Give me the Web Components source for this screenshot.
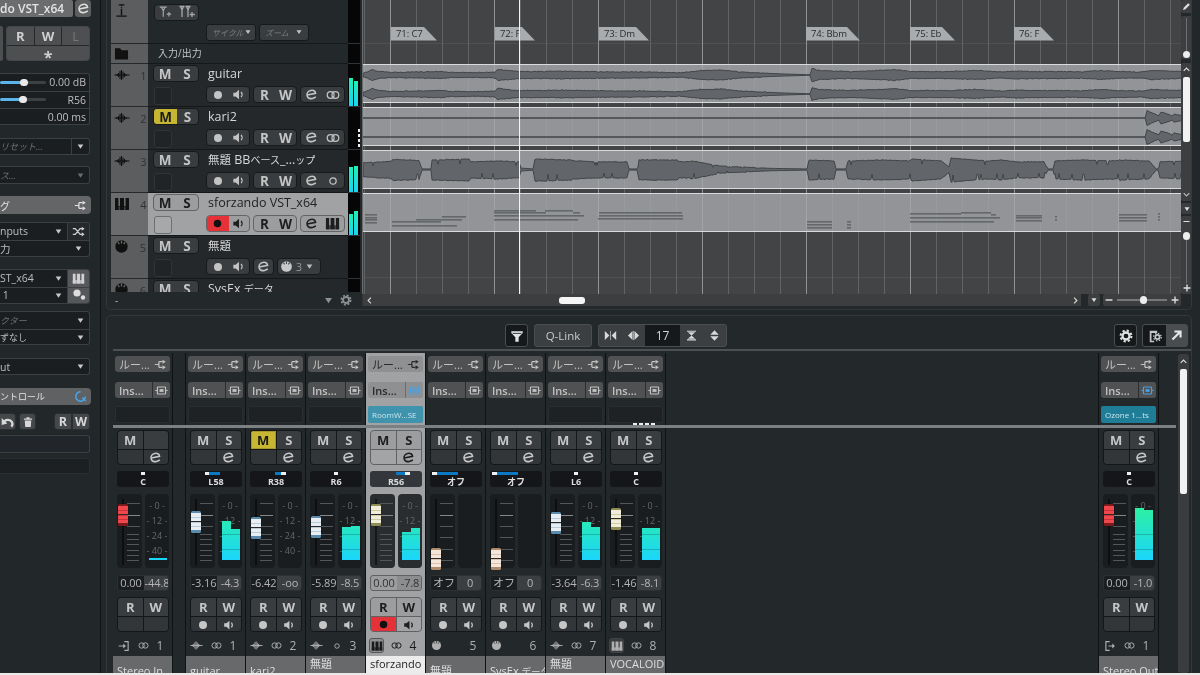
<!DOCTYPE html>
<html lang="ja"><head><meta charset="utf-8"><title>Mix</title>
<style>
html,body{margin:0;padding:0;background:#22272a;overflow:hidden}
body{width:1200px;height:675px;font-family:"Open Sans","Noto Sans CJK JP",sans-serif;color:#c8c8c8}
</style></head><body>
<daw-app>
  <daw-inspector slot="left"></daw-inspector>
  <daw-project slot="top"></daw-project>
  <daw-mixer slot="bottom"></daw-mixer>
</daw-app>
<script>
const ICONS={
 wave:'<path d="M.5 8h15M3 7v2M4.5 6v4M6 4v8M7.5 3v10M9 4.5v7M10.5 6v4M12 7v2" stroke="currentColor" stroke-width="1.1" fill="none"/>',
 piano:'<path d="M1 2h3.4v12H1zM6 2h4v12H6zM11.6 2H15v12h-3.4z" fill="currentColor"/><path d="M1 10h14v4H1z" fill="currentColor"/><path d="M5.2 10.5v3.5M10.8 10.5v3.5" stroke="#8a8a8a" stroke-width=".6"/>',
 knob:'<circle cx="8" cy="8" r="6.6" fill="currentColor"/><path d="M8 1.8v3M4.2 3.2l1.5 2.2M11.8 3.2l-1.5 2.2" stroke="var(--kn,#8a8b8c)" stroke-width="1.3"/>',
 e:'<g transform="rotate(-12 8 8)"><path d="M2.6 7.6h10.6C13.4 4.6 11.4 3 8.2 3 4.8 3 2.4 5.2 2.4 8.2c0 3 2.3 4.8 5.8 4.8 1.6 0 3-.3 4.4-.9" fill="none" stroke="currentColor" stroke-width="1.9"/></g>',
 link:'<circle cx="5.3" cy="8" r="3.9" fill="none" stroke="currentColor" stroke-width="1.4"/><circle cx="10.7" cy="8" r="3.9" fill="none" stroke="currentColor" stroke-width="1.4"/>',
 mono:'<circle cx="8" cy="8" r="3.6" fill="none" stroke="currentColor" stroke-width="1.4"/>',
 speaker:'<path d="M2.5 6H5l3.5-3v10L5 10H2.5z" fill="currentColor"/><path d="M10.8 5.2c1.2 1.6 1.2 4 0 5.6" fill="none" stroke="currentColor" stroke-width="1.3"/>',
 dot:'<circle cx="8" cy="8" r="4" fill="currentColor"/>',
 route:'<path d="M1 8h5M6 4.5h4.5M6 11.5h4.5M6 4.5v7" fill="none" stroke="currentColor" stroke-width="1.5"/><path d="M10.5 2l4 2.5-4 2.5zM10.5 9l4 2.5-4 2.5z" fill="currentColor"/>',
 insert:'<rect x="3" y="3.7" width="10" height="8.6" rx="1" fill="none" stroke="currentColor" stroke-width="1.4"/><rect x="5.5" y="6.3" width="5" height="3.4" fill="currentColor"/><path d="M.5 8h2.5M13 8h2.5" stroke="currentColor" stroke-width="1.4"/>',
 tri:'<path d="M3 4.5h10L8 12z" fill="currentColor"/>',
 gear:'<circle cx="8" cy="8" r="4" fill="none" stroke="currentColor" stroke-width="2.6"/><circle cx="8" cy="8" r="6.2" fill="none" stroke="currentColor" stroke-width="2.3" stroke-dasharray="2.6 2.27"/>',
 funnel:'<path d="M1.5 2.5h13v2.2l-4.6 4.6v5.2H6.1V9.3L1.5 4.7z" fill="currentColor"/><path d="M3 5h10" stroke="#1c1f21" stroke-width="1"/>',
 folder:'<path d="M1 2.5h5.5L8 4.5h7v10H1z" fill="currentColor"/>',
 shuffle:'<path d="M1 4.5h3l6 7h2.5M1 11.5h3l6-7h2.5" fill="none" stroke="currentColor" stroke-width="1.6"/><path d="M12 2l3.5 2.5L12 7zM12 9l3.5 2.5L12 14z" fill="currentColor"/>',
 undo:'<path d="M3 8.5C4.5 5 10.5 4.5 12.5 8c1 2 .5 4-.8 5.2" fill="none" stroke="currentColor" stroke-width="2.6"/><path d="M.8 3.5l6.4 6.2L.8 11.5z" fill="currentColor"/>',
 trash:'<path d="M2.5 3.3h11v1.8h-11zM6 1.8h4v1.5H6zM3.7 6h8.6l-.6 8.5H4.3z" fill="currentColor"/>',
 ring:'<path d="M8 2.2a5.8 5.8 0 1 0 5.8 5.8" fill="none" stroke="currentColor" stroke-width="1.8"/><path d="M10 9.5l4.5 4" stroke="currentColor" stroke-width="1.8"/>',
 pin:'<path d="M8.5 2.2h5v11.6h-5M1 8h8" fill="none" stroke="currentColor" stroke-width="1.5"/><path d="M7 4.8L10.6 8 7 11.2z" fill="currentColor"/>',
 pout:'<path d="M7.5 2.2h-5v11.6h5M6 8h7" fill="none" stroke="currentColor" stroke-width="1.5"/><path d="M11 4.8L14.6 8 11 11.2z" fill="currentColor"/>',
 tin:'<path d="M1 2.5l5.6 5.5L1 13.5zM15 2.5L9.4 8l5.6 5.5zM7.6 2.5h.8v11h-.8z" fill="currentColor"/>',
 tout:'<path d="M6.8 2.5L1.2 8l5.6 5.5zM9.2 2.5L14.8 8l-5.6 5.5zM7.6 2.5h.8v11h-.8z" fill="currentColor"/>',
 hour:'<path d="M2.5 2h11v1.5h-11zM2.5 12.5h11V14h-11zM3.5 4h9L8 8zM3.5 12l4.5-4 4.5 4z" fill="currentColor"/>',
 updn:'<path d="M8 1.5l5.2 5.7H2.8zM8 14.5l-5.2-5.7h10.4z" fill="currentColor"/>',
 arrow:'<path d="M3 13L12 4M5.5 3h7.5v7.5" fill="none" stroke="currentColor" stroke-width="2.6"/>',
 wingear:'<path d="M2 2h8.5v2.5H4v9h3v1.5H2z" fill="currentColor"/><circle cx="10.8" cy="9.2" r="2.4" fill="none" stroke="currentColor" stroke-width="2"/><circle cx="10.8" cy="9.2" r="4.3" fill="none" stroke="currentColor" stroke-width="1.5" stroke-dasharray="1.7 1.67"/>',
 pencil:'<path d="M2 14l1-4 8-8 3 3-8 8z" fill="currentColor"/>',
 plus:'<path d="M8 2.5v11M2.5 8h11" stroke="currentColor" stroke-width="2.2"/>',
 minus:'<path d="M2.5 8h11" stroke="currentColor" stroke-width="2.2"/>',
 left:'<path d="M10.5 3L5.5 8l5 5" fill="none" stroke="currentColor" stroke-width="2"/>',
 right:'<path d="M5.5 3l5 5-5 5" fill="none" stroke="currentColor" stroke-width="2"/>',
 up:'<path d="M3 10.5l5-5 5 5" fill="none" stroke="currentColor" stroke-width="2"/>',
 down:'<path d="M3 5.5l5 5 5-5" fill="none" stroke="currentColor" stroke-width="2"/>',
 tadd:'<path d="M2 2.5h8M4 2.5l2 4v7M8 2.5l-2 4M12.5 8v5M10 10.5h5" fill="none" stroke="currentColor" stroke-width="1.3"/>',
 ttadd:'<path d="M.5 2.5h5M1.5 2.5L3 6v7M4.5 2.5L3 6M6.5 2.5h5M7.5 2.5L9 6v7M10.5 2.5L9 6M13 8v5M10.8 10.5h5" fill="none" stroke="currentColor" stroke-width="1.3"/>',
 cursor:'<path d="M8 6v7M5 2h6M2.5 14h11" stroke="currentColor" stroke-width="1.5" fill="none"/><path d="M8 2v4" stroke="currentColor" stroke-width="1.5" stroke-dasharray="1 1"/>'
};
class IcOn extends HTMLElement{
 connectedCallback(){
  const n=this.getAttribute('n'),s=this.getAttribute('s')||14;
  if(!this.shadowRoot)this.attachShadow({mode:'open'});
  this.shadowRoot.innerHTML=`<style>:host{display:inline-flex;align-items:center;justify-content:center;flex:none;line-height:0}</style><svg width="${s}" height="${s}" viewBox="0 0 16 16">${ICONS[n]||''}</svg>`;
 }
}
customElements.define('ic-on',IcOn);

class DawApp extends HTMLElement{
 constructor(){super();this.attachShadow({mode:'open'}).innerHTML=`<style>
 :host{display:flex;flex-direction:column;width:1200px;height:675px;overflow:hidden;background:#22272a;filter:blur(.3px)}
 .main{display:flex;height:673px;overflow:hidden}
 .right{width:1086px;margin-left:5px;display:flex;flex-direction:column;gap:5px}
 .edge{height:2px;background:#e9e9e9;flex:none}
 </style><div class="main"><slot name="left"></slot><div class="right"><slot name="top"></slot><slot name="bottom"></slot></div></div><div class="edge"></div>`;}
}
customElements.define('daw-app',DawApp);

/* ---------- Inspector ---------- */
class DawInspector extends HTMLElement{
 constructor(){super();const dd='<ic-on n="tri" s="9"></ic-on>';
 this.attachShadow({mode:'open'}).innerHTML=`<style>
 :host{display:block;width:91px;flex:none;padding-right:9px;border-right:1px solid #101315;height:673px;overflow:hidden;font-size:10.5px;color:#bdbdbd;box-sizing:content-box}
 *{box-sizing:border-box}
 .r{display:flex}
 .title{height:17px;gap:2px}
 .title b{flex:1;background:#6a6c6d;color:#e4e4e4;font-weight:600;font-size:12px;line-height:17px;white-space:nowrap;border-radius:0 2px 2px 0}
 .title i{width:16px;background:#5c5e60;border-radius:3px;color:#ddd;display:flex;align-items:center;justify-content:center}
 .auto{margin-top:9px;height:35px;gap:3px}
 .auto u{width:3px;background:#4c4e50;border-radius:0 2px 2px 0}
 .rwl{flex:none;width:84px;display:grid;grid-template-columns:1fr 1fr 1fr;grid-template-rows:1fr 1fr;gap:1px;background:#26292c;border:1px solid #44474a;border-radius:3px;overflow:hidden}
 .rwl span{background:#4d4f51;display:flex;align-items:center;justify-content:center;font-weight:700;font-size:13px;color:#d0d0d0}
 .rwl .l{color:#777;font-weight:400}
 .rwl .st{grid-column:1/4;font-size:16px}
 .box{width:90px;background:#1b1e20;border:1px solid #3c4043;border-left:0;border-radius:0 3px 3px 0;overflow:hidden}
 .row{height:17px;display:flex;align-items:center;padding:0 3px 0 0;white-space:nowrap;border-top:1px solid #3c4043}
 .row:first-child{border-top:0;height:16.5px}
 .one{height:100%!important}
 .sp{flex:1}
 .bar{height:3.5px;border-radius:2px}
 .knob{width:7.5px;height:7.5px;background:#e9e9e9;border-radius:50%;margin:0 -2px;position:relative}
 .dim{color:#6f7274;font-style:italic}
 .jp{font-size:9px}
 .arrow{width:18px;height:100%;border-left:1px solid #3c4043;margin-right:-3px;display:flex;align-items:center;justify-content:center;color:#c8c8c8}
 .arrow.n{border:0}
 .arrow.off{color:#6a6d6f}
 .hdr{height:18px;width:91px;background:#636567;border-radius:0 4px 4px 0;color:#e2e2e2;font-size:10px;display:flex;align-items:center;padding-right:4px;white-space:nowrap}
 .two{display:grid;grid-template-columns:1fr 22px;grid-auto-rows:1fr}
 .two .side{border-left:1px solid #3c4043;background:#26292c;display:flex;align-items:center;justify-content:center;color:#d0d0d0}
 .two .side.lt{background:#55575a}
 .two .row{border-top:0;height:auto}
 .two .row.b,.two .side.b{border-top:1px solid #3c4043}
 .btn{height:17px;background:#45484a;border:1px solid #2b2e30;border-radius:3px;display:flex;align-items:center;justify-content:center;color:#d8d8d8;font-weight:700;font-size:12.5px}
 </style>
 <div class="r title"><b>do VST_x64</b><i><ic-on n="e" s="13"></ic-on></i></div>
 <div class="r auto"><u></u><div class="rwl"><span>R</span><span>W</span><span class="l">L</span><span class="st">*</span></div></div>
 <div class="box" style="margin-top:12px;height:52px">
  <div class="row"><div class="bar" style="width:22px;background:#5bb4ea"></div><div class="knob"></div><div class="bar" style="width:20px;background:#3d4144"></div><span class="sp"></span>0.00 dB</div>
  <div class="row"><div class="bar" style="width:21px;background:#5bb4ea"></div><div class="knob"></div><div class="bar" style="width:21px;background:#3d4144"></div><span class="sp"></span>R56</div>
  <div class="row"><span class="sp"></span>0.00 ms</div>
 </div>
 <div class="box" style="margin-top:13px;height:17px"><div class="row one"><span class="dim jp">リセット...</span><span class="sp"></span><span class="arrow">${dd}</span></div></div>
 <div class="box" style="margin-top:11px;height:18px"><div class="row one"><span class="dim jp">ス...</span><span class="sp"></span><span class="arrow n off">${dd}</span></div></div>
 <div class="hdr" style="margin-top:12px">グ<span class="sp"></span><ic-on n="route" s="13"></ic-on></div>
 <div class="box two" style="margin-top:8px;height:35px">
  <div class="row">nputs<span class="sp"></span><span class="arrow n">${dd}</span></div><div class="side"><ic-on n="shuffle" s="13"></ic-on></div>
  <div class="row b" style="grid-column:1/3">力<span class="sp"></span><span class="arrow n" style="margin-right:-1px">${dd}</span></div>
 </div>
 <div class="box two" style="margin-top:12px;height:35px">
  <div class="row">ST_x64<span class="sp"></span><span class="arrow n">${dd}</span></div><div class="side lt"><ic-on n="piano" s="13"></ic-on></div>
  <div class="row b">&nbsp;1<span class="sp"></span><span class="arrow n">${dd}</span></div><div class="side lt b"><svg width="14" height="14" viewBox="0 0 14 14"><circle cx="5" cy="5" r="3.6" fill="#ddd"/><circle cx="11" cy="9.5" r="2.2" fill="#ddd"/></svg></div>
 </div>
 <div class="box" style="margin-top:7px;height:34px">
  <div class="row"><span class="dim jp">クター</span><span class="sp"></span><span class="arrow n">${dd}</span></div>
  <div class="row"><span class="jp">ずなし</span><span class="sp"></span><span class="arrow n">${dd}</span></div>
 </div>
 <div class="box" style="margin-top:13px;height:17px"><div class="row one">ut<span class="sp"></span><span class="arrow n">${dd}</span></div></div>
 <div class="hdr" style="margin-top:13px;height:17px;background:#5f6163;font-size:9px">ントロール<span class="sp"></span><ic-on n="ring" s="13" style="color:#4aa8ee"></ic-on></div>
 <div class="r" style="margin-top:8px;width:90px">
  <div class="btn" style="width:16px;border-left:0;border-radius:0 3px 3px 0"><ic-on n="undo" s="14"></ic-on></div>
  <div class="btn" style="width:17px;margin-left:3px"><ic-on n="trash" s="12"></ic-on></div>
  <span class="sp"></span>
  <div class="btn" style="width:18px;border-radius:3px 0 0 3px">R</div><div class="btn" style="width:18px;border-radius:0 3px 3px 0">W</div>
 </div>
 <div class="box" style="margin-top:5px;height:18px;background:#22262a"></div>
 <div class="box" style="margin-top:5px;height:16px;background:#1d2023;border-color:#2a2e30"></div>`;}
}
customElements.define('daw-inspector',DawInspector);

/* ---------- Track list rows ---------- */
const BTN=`
 .g{display:inline-flex;height:17px;background:var(--btn);border:1px solid var(--bd);border-radius:4px;overflow:hidden;flex:none}
 .g>span{flex:1;display:flex;align-items:center;justify-content:center;font-weight:700;font-size:13.5px;color:var(--fg)}
`;
class TrackRow extends HTMLElement{
 constructor(){super();this.attachShadow({mode:'open'});}
 connectedCallback(){
  const a=k=>this.getAttribute(k)||'',sel=this.hasAttribute('sel'),t=a('type');
  const kind=a('kind');
  let tail;
  if(t==='midi5'){
   tail=`<div class="g" style="width:21px"><span><ic-on n="e" s="13"></ic-on></span></div>
   <div class="g" style="width:44px;padding:0 6px 0 2px;align-items:center;gap:3px;--kn:#45484a"><ic-on n="knob" s="13" style="color:#c8c8c8"></ic-on><b style="font-weight:400;font-size:10.5px;color:#9a9a9a;flex:1">3</b><ic-on n="tri" s="9" style="color:#bbb"></ic-on></div>`;
  }else{
   tail=`<div class="g rw"><span>R</span><span>W</span></div><div class="g rw" style="width:45px"><span style="flex:.9"><ic-on n="e" s="13"></ic-on></span><span><ic-on n="${t==='mono'?'mono':t==='piano'?'piano':'link'}" s="${t==='piano'?15:14}"></ic-on></span></div>`;
  }
  const m=a('meter');
  this.shadowRoot.innerHTML=`<style>
  :host{display:grid;grid-template-columns:37px 200px 12px;height:43px;--btn:${sel?'#9b9d9e':'#3a3d3f'};--bd:${sel?'#626466':'#171a1c'};--fg:${sel?'#1e1e1e':'#c4c4c4'};--kn:${sel?'#6f7071':'#5c5d5e'};font-size:12.5px}
  *{box-sizing:border-box}
  .h{background:${sel?'#6b6c6d':'#5c5d5e'};border-bottom:1px solid #26292b;color:#111;display:flex;padding:3px 0 0 3px;align-items:flex-start;--kn:#6e6f70}
  .h i{font-style:normal;color:#303234;font-size:11px;margin-left:9px;margin-top:1px;width:12px;text-align:center}
  .b{background:${sel?'#a0a2a3':'#24282b'};border-bottom:1px solid #15181a;display:grid;grid-template-columns:58px 1fr;padding-top:1px}
  .l{padding-left:5px}
  ${BTN}
  .ms{width:46px}
  .m{background:#c7b632;color:#1c1c1c!important;flex:1.1!important}
  .sq{width:18px;height:18px;margin:4px 0 0 1px;border:1px solid ${sel?'#6d6f71':'#303437'};border-radius:3px;background:${sel?'#a6a8a9':'#202427'}}
  .nm{height:17px;line-height:17px;color:${sel?'#222':'#d6d6d6'};white-space:nowrap;padding-left:2px}
  .nm .k{font-size:11.5px}.nm .j{font-size:10px}
  .bt{display:flex;gap:3px;margin-top:4px}
  .rw{width:44px}
  .g.rec{width:44px}
  .redc{background:#e53239;color:#111!important;flex:1.05!important}
  .mt{background:#060607;border-bottom:1px solid #30343a;display:flex;gap:1px;padding:0 0 0 1px;align-items:flex-end}
  .mt u{width:4px;background:linear-gradient(#1ff0b8,#18d5f0)}
  .mt em{margin-left:auto;width:2px;height:20px;background:repeating-linear-gradient(#eee 0 3px,transparent 3px 5px)}
  </style>
  <div class="h"><ic-on n="${kind}" s="${kind==='knob'?15:16}"></ic-on><i>${a('num')}</i></div>
  <div class="b"><div class="l"><div class="g ms"><span class="${a('mute')?'m':''}">M</span><span>S</span></div><div class="sq"></div></div>
  <div><div class="nm">${a('name')}</div><div class="bt"><div class="g rec"><span class="${sel?'redc':''}"><ic-on n="dot" s="${sel?15:16}"></ic-on></span><span><ic-on n="speaker" s="15"></ic-on></span></div>${tail}</div></div></div>
  <div class="mt">${m?m.split(',').map(h=>`<u style="height:${h}px"></u>`).join(''):''}${this.hasAttribute('dash')?'<em></em>':''}</div>`;
 }
}
customElements.define('track-row',TrackRow);

/* ---------- Timeline lane ---------- */
function seeded(s){return()=>(s=(s*16807)%2147483647)/2147483647}
function interp(p,x){for(let i=1;i<p.length;i++){if(x<=p[i][0]){const a=p[i-1],b=p[i];return a[1]+(b[1]-a[1])*(x-a[0])/Math.max(b[0]-a[0],.001)}}return p[p.length-1][1]}
function wavePath(pts,cy,seed,jit,skew,spike){
 const r=seeded(seed),top=[],bot=[];
 for(let x=362;x<=1181;x+=1){
  const a=interp(pts,x);const big=a>1.5;
  const j=big?(r()-.5)*jit:0;
  let t=a+j,b=a+(big?(r()-.5)*jit:0);
  if(spike&&big&&r()<spike){if(r()<.7)b*=.45;else t*=.55}
  top.push((x-362)+','+(cy-t*(skew||1)).toFixed(1));
  bot.unshift((x-362)+','+(cy+b*(2-(skew||1))).toFixed(1));
 }
 return 'M'+top.join('L')+'L'+bot.join('L')+'Z';
}
const P1=[[362,2],[366,3],[371,5.5],[378,3.5],[390,2.5],[415,3],[440,3.5],[450,2.5],[480,2.4],[494,3],[497,5.5],[518,3.5],[540,3.5],[560,3.8],[598,3.2],[640,3],[680,2.2],[700,4.5],[720,5],[740,3],[770,1.5],[806,.3],[809,.3],[811,6.5],[818,4.5],[830,4],[850,3.5],[886,5],[893,5.5],[910,3.5],[950,3.5],[975,4.5],[1000,3],[1015,4],[1030,3.5],[1060,3.5],[1080,3.2],[1100,4.5],[1115,3.5],[1140,3],[1150,4.5],[1181,3.5]];
const P2=[[362,.05],[1144,.05],[1146,7.5],[1150,5.5],[1157,2.5],[1158,2.5],[1160,6],[1168,3.5],[1171,2],[1173,4],[1181,2.5]];
const P3=[[362,7],[390,8.5],[392,10.5],[418,9.5],[421,.6],[430,.6],[431,10],[468,11],[470,8],[495,9],[497,9],[518,8],[520,1.5],[532,.6],[534,11],[570,10],[573,9],[598,8],[600,8],[626,8],[628,.6],[636,.6],[638,10],[676,10],[678,8],[689,8],[690,9],[702,7],[720,3.5],[770,1.2],[806,.6],[808,10],[833,9],[835,.6],[845,.6],[847,9],[880,10],[908,9],[911,11],[940,9],[948,3],[950,12],[986,9],[989,9],[1000,10],[1015,8],[1017,8],[1043,8],[1047,.6],[1052,.6],[1054,9],[1080,10],[1115,9],[1118,10],[1148,9],[1155,.6],[1157,.6],[1159,8],[1181,9]];
const NOTES=[[364,376,215],[364,376,218],[364,376,220],[364,376,223],[391,440,222],[415,461,220],[441,465,217],[391,456,226],
[493,535,211],[493,545,213],[544,572,211],[572,579,213],[493,583,216],[493,577,220],[598,681,213],[598,682,216],[597,682,219],
[806,831,222],[806,831,225],[806,831,228],[846,850,222],[846,850,225],[846,850,228],[909,960,214],[960,990,213],[990,995,215],[909,999,218],[909,993,222],
[1015,1041,216],[1015,1041,218],[1015,1041,221],[1054,1056,217],[1054,1056,220],[1118,1146,215],[1118,1146,218],[1118,1146,221],[1157,1159,214],[1157,1159,217],[1157,1159,220]];
class TimeLane extends HTMLElement{
 constructor(){super();this.attachShadow({mode:'open'});}
 connectedCallback(){
  const k=this.getAttribute('k');let c='';
  const w=(d)=>`<path d="${d}" fill="#62666a" stroke="#35383b" stroke-width=".8" stroke-linejoin="round"/>`;
  if(k==='1')c=w(wavePath(P1,11,11,.9))+w(wavePath(P1,30,23,.9));
  if(k==='2')c=w(wavePath(P2,11,31,.5))+w(wavePath(P2,30,47,.5));
  if(k==='3')c=w(wavePath(P3,19.5,61,.8,.95,.07));
  if(k==='4')c=NOTES.map(n=>`<rect x="${n[0]-362}" y="${n[2]-194}" width="${n[1]-n[0]}" height="1.6" fill="#64686b"/>`).join('');
  this.shadowRoot.innerHTML=`<style>:host{display:block;height:43px;flex:none}
  .ev{height:39px;background:rgba(166,169,171,.8);border-top:1.5px solid #d9dadb;border-bottom:1.5px solid #d9dadb;box-sizing:border-box;overflow:hidden}
  svg{display:block;margin-top:-1.5px}</style><div class="ev"><svg width="819" height="39" viewBox="0 0 819 39">${c}</svg></div>`;
 }
}
customElements.define('time-lane',TimeLane);

class ChordMark extends HTMLElement{
 constructor(){super();this.attachShadow({mode:'open'});}
 connectedCallback(){
  const x=+this.getAttribute('x'),w=+this.getAttribute('w');
  this.shadowRoot.innerHTML=`<style>:host{position:absolute;left:${x-363}px;top:27px;width:${w}px;height:13.5px;background:#a9acae;clip-path:polygon(0 0,${w-13}px 0,100% 100%,0 100%);font-size:9.5px;letter-spacing:-.1px;line-height:13.5px;color:#2b2c2d;padding-left:5px;box-sizing:border-box;white-space:nowrap;overflow:hidden}</style><slot></slot>`;
 }
}
customElements.define('chord-mark',ChordMark);

/* ---------- Project ---------- */
class DawProject extends HTMLElement{
 constructor(){super();this.attachShadow({mode:'open'}).innerHTML=`<style>
 :host{display:block;height:310px;flex:none;border:1px solid #33383b;border-top:0;border-radius:0 0 5px 5px;box-sizing:border-box;background:#23282b;overflow:hidden}
 *{box-sizing:border-box}
 .grid{display:grid;grid-template-columns:255px 819px 11px;grid-template-rows:294px 12px}
 .list{padding-left:4px;height:292px;overflow:hidden}
 .rowt{display:grid;grid-template-columns:37px 200px 12px}
 .rowt .h{background:#5c5d5e;border-bottom:1px solid #26292b;color:#111;display:flex;align-items:flex-start;padding:3px 0 0 3px}
 .rowt .m{background:#060607;border-bottom:1px solid #30343a}
 .rowt .b{border-bottom:1px solid #15181a;background:#23282b}
 .t1{height:44px}.t1 .b{padding:4px 0 0 6px}
 .t2{height:20px}.t2 .b{font-size:10px;line-height:18px;padding-left:10px;color:#c4c4c4}
 .ig{display:flex;width:45px;height:16.5px;background:#3a3d3f;border:1px solid #171a1c;border-radius:4px;align-items:center;justify-content:space-around;color:#a8a8a8}
 .dds{display:flex;gap:3px;margin:3px 0 0 52px}
 .dd{width:50px;height:17px;background:#3a3d3f;border:1px solid #171a1c;border-radius:3px;display:flex;align-items:center;justify-content:space-between;padding:0 5px;font-size:8px;font-style:italic;color:#7c7f81;white-space:nowrap}
 .dd ic-on{color:#c4c4c4}
 .tl{position:relative;overflow:hidden;display:flex;flex-direction:column;background-color:#434445;
  background-image:linear-gradient(90deg,#909192 1px,transparent 1px),linear-gradient(90deg,#626364 1px,transparent 1px),linear-gradient(#4f5051,#4f5051),linear-gradient(#4f5051,#4f5051);
  background-size:104px 100%,26px 100%,100% 1px,100% 1px;background-position:27px 0,1px 0,0 43px,0 277px;background-repeat:repeat-x,repeat-x,no-repeat,no-repeat;border-left:1px solid #6b6c6d}
 .chord{height:64px;flex:none}
 .cursor{position:absolute;left:155.5px;top:0;bottom:0;width:1.3px;background:#f3f3f3}
 .vs{display:flex;flex-direction:column;gap:3px;padding-left:0;height:294px}
 .vs>div{background:#3c3e40;border-radius:2px;display:flex;flex-direction:column;align-items:center;color:#dfdfdf;position:relative}
 .th{width:1.5px;background:#6e7173;flex:1}
 .kn{width:7.5px;height:7.5px;border-radius:50%;background:#ededed;flex:none}
 .thumb{width:7px;height:65px;background:#f2f2f2;border-radius:2px;margin:3px 0 auto}
 .lf{display:flex;align-items:center;justify-content:space-between;padding:0 10px 0 8px;color:#bbb;height:12px}
 .lf b{font-weight:400;font-size:10px}
 .sb{background:#3c3e40;display:flex;height:12px;align-items:center;padding:0 0 0 2px;color:#ddd;border-left:1px solid #333}
 .tmb{width:26px;height:7px;background:#f5f5f5;border-radius:3px;margin-left:185px}
 .dda{width:12px;height:12px;background:#3c3e40;border-radius:2px;margin-left:7px;display:flex;align-items:center;justify-content:center;color:#ddd}
 .zs{width:78px;height:12px;margin-left:3px;background:#3c3e40;border-radius:2px;display:flex;align-items:center;padding:0 1px;color:#ddd}
 .zs i{height:1.5px;background:#75787a;flex:1}
 </style>
 <div class="grid">
  <div class="list">
   <div class="rowt t1"><div class="h"><ic-on n="cursor" s="15"></ic-on></div><div class="b"><div class="ig"><ic-on n="tadd" s="14"></ic-on><ic-on n="ttadd" s="16"></ic-on></div>
    <div class="dds"><div class="dd">サイクル<ic-on n="tri" s="8"></ic-on></div><div class="dd">ズーム<ic-on n="tri" s="8"></ic-on></div></div></div><div class="m"></div></div>
   <div class="rowt t2"><div class="h" style="padding:2px 0 0 3px"><ic-on n="folder" s="15"></ic-on></div><div class="b">入力/出力</div><div class="m"></div></div>
   <track-row kind="wave" num="1" name="guitar" type="link" meter="28,25"></track-row>
   <track-row kind="wave" num="2" name="kari2" mute="1" type="link" dash></track-row>
   <track-row kind="wave" num="3" name="<span class='k'>無題</span> BB<span class='j'>ベース</span>_...<span class='j'>ップ</span>" type="mono" meter="25,26"></track-row>
   <track-row kind="piano" num="4" name="sforzando VST_x64" sel type="piano" meter="21,24"></track-row>
   <track-row kind="knob" num="5" name="<span class='k'>無題</span>" type="midi5"></track-row>
   <track-row kind="knob" num="6" name="SysEx <span class='j'>データ</span>" type="midi5"></track-row>
  </div>
  <div class="tl">
   <div class="chord"></div>
   <time-lane k="1"></time-lane><time-lane k="2"></time-lane><time-lane k="3"></time-lane><time-lane k="4"></time-lane>
   <chord-mark x="391" w="46">71: C7</chord-mark><chord-mark x="495" w="40">72: F</chord-mark><chord-mark x="599" w="50">73: Dm</chord-mark>
   <chord-mark x="806" w="54">74: Bbm</chord-mark><chord-mark x="910" w="45">75: Eb</chord-mark><chord-mark x="1014" w="40">76: F</chord-mark>
   <div class="cursor"></div>
  </div>
  <div class="vs">
   <div style="height:13px;justify-content:center"><ic-on n="pencil" s="9"></ic-on></div>
   <div style="height:43px;padding:2px 0 1px"><span class="th"></span><span class="kn"></span></div>
   <div style="height:138px;margin-top:1px"><ic-on n="up" s="9" style="margin-top:2px"></ic-on><span class="thumb"></span><ic-on n="down" s="9" style="margin-bottom:2px;color:#bbb"></ic-on></div>
   <div style="height:11px;justify-content:center;margin-top:-1px"><ic-on n="tri" s="8"></ic-on></div>
   <div style="flex:1;margin-top:-1px"><ic-on n="minus" s="9" style="margin:1px 0"></ic-on><span class="kn" style="margin-top:5px"></span><span class="th"></span><ic-on n="plus" s="10" style="margin-bottom:1px"></ic-on></div>
  </div>
  <div class="lf"><b>-</b><span style="display:flex;gap:6px;align-items:center"><ic-on n="tri" s="11" style="color:#8d9092"></ic-on><ic-on n="gear" s="12" style="color:#8d9092"></ic-on></span></div>
  <div style="display:flex">
   <div class="sb" style="width:722px"><ic-on n="left" s="9"></ic-on><span class="tmb"></span><span style="flex:1"></span><ic-on n="right" s="9" style="margin-right:1px"></ic-on></div>
   <div class="dda"><ic-on n="tri" s="8"></ic-on></div>
   <div class="zs"><ic-on n="minus" s="10"></ic-on><i style="margin-left:3px"></i><span class="kn"></span><i style="flex:.9"></i><ic-on n="plus" s="10" style="margin-left:3px"></ic-on></div>
  </div>
  <div></div>
 </div>`;}
}
customElements.define('daw-project',DawProject);

/* ---------- Mixer strips ---------- */
const CAPS={red:['#7e1a1d','#f0474d','#c93238'],blue:['#5a8bad','#e8eef2','#b7cbd8'],cream:['#8f8d55','#f0eedb','#cfcca0'],tan:['#ad8a6c','#f6e6da','#dcc2ae']};
class StripUpper extends HTMLElement{
 constructor(){super();this.attachShadow({mode:'open'});}
 connectedCallback(){
  const sel=this.hasAttribute('sel'),slot=this.getAttribute('slot-name'),noslot=this.hasAttribute('noslot'),blue=this.hasAttribute('blue');
  this.shadowRoot.innerHTML=`<style>
  :host{display:block;width:60px;height:72px;flex:none;box-sizing:border-box;border-right:1px solid #0f1214;padding:3px 0 0 2px;background:${sel?'#a0a2a3':'transparent'}}
  *{box-sizing:border-box}
  .b{width:55px;height:16px;background:${sel?'#8e9091':'#4f5153'};border-radius:3px;display:flex;align-items:center;font-size:11px;line-height:15px;color:${sel?'#2a2a2a':'#c2c2c2'};padding-left:4px;justify-content:space-between;padding-right:3px;white-space:nowrap}
  .i{margin-top:10px;padding:0;overflow:hidden}
  .i span{flex:1;padding-left:4px;font-weight:600}
  .i em{width:18px;height:100%;border-left:1px solid ${sel?'#6a6c6e':'#2b2e30'};display:flex;align-items:center;justify-content:center;font-style:normal;background:${sel?'#8e9091':'#4f5153'};color:${blue?'#4a9fe3':sel?'#333':'#c2c2c2'}}
  .s{margin-top:8px;width:55px;height:17px;border-radius:2px;font-size:8px;line-height:17px;padding-left:4px;white-space:nowrap;overflow:hidden}
  .s.e{background:#1e2225;border:1px solid #2a2e31}
  .s.f{background:${sel?'#3f93ad':'#1f7d97'};color:#c9e6ee}
  </style>
  <div class="b">ルー...<ic-on n="route" s="13"></ic-on></div>
  <div class="b i"><span>Ins...</span><em><ic-on n="insert" s="13"></ic-on></em></div>
  ${noslot?'':slot?`<div class="s f">${slot}</div>`:'<div class="s e"></div>'}`;
 }
}
customElements.define('strip-upper',StripUpper);

class StripLower extends HTMLElement{
 constructor(){super();this.attachShadow({mode:'open'});}
 connectedCallback(){
  const a=k=>this.getAttribute(k)||'',sel=this.hasAttribute('sel'),io=this.hasAttribute('io'),off=this.hasAttribute('off');
  const cap=CAPS[a('cap')],capTop=+a('captop');
  const [c0,c1,c2]=cap;
  const tk=off?[[9,13],[21,13,1],[32,13],[43,13],[55,13],[66,13]]:[[9,13],[21,13,1],[32,13],[40,12],[45,12],[50,12],[56,12],[61,12],[66,12]];
  const ticks=tk.map(t=>`<rect x="10" y="${t[0]}" width="${t[1]}" height="1" fill="${t[2]?'#85888a':'#54575a'}"/>`).join('');
  const ml=a('ml'),mr=a('mr');
  const bar=(v,x)=>v?`<u style="left:${x}px;top:${+v-494}px;height:${560-v}px"></u>`:'';
  const panb=a('pan').split(',');
  const kind=a('kind'),num=a('num'),lk=a('lk');
  this.shadowRoot.innerHTML=`<style>
  :host{display:block;width:60px;flex:none;height:245px;box-sizing:border-box;border-right:1px solid #0f1214;padding:2px 0 0 4px;overflow:hidden;background:${sel?'#a0a2a3':'transparent'};
   --c:${sel?'#9b9d9e':'#3a3d3f'};--c2:${sel?'#a2a4a5':'#333639'};--bd:${sel?'#5f6163':'#14171a'};--f:${sel?'#1e1e1e':'#c6c6c6'}}
  *{box-sizing:border-box}
  .g{width:52px;height:35px;display:grid;grid-template-columns:1fr 1fr;grid-template-rows:1fr 1fr;gap:1px;background:var(--bd);border:1px solid var(--bd);border-radius:4px;overflow:hidden}
  .g span{background:var(--c);display:flex;align-items:center;justify-content:center;font-weight:700;font-size:13px;color:var(--f)}
  .g span.l{background:var(--c2);font-weight:400}
  .g span.m{background:#c7b632;color:#1a1a1a;box-shadow:inset 0 0 0 1px #a8992a}
  .g span.rc{background:#e53239;color:#111}
  .pan{position:relative;margin-top:6px;width:52px;height:16px;background:${sel?'#33363a':'#141619'};border-radius:3px;text-align:center;font-weight:700;font-size:9px;line-height:17px;padding-top:2px;color:#dcdcdc}
  .pan i{position:absolute;top:1px;height:2.5px}
  .fm{display:flex;gap:3px;margin-top:7px;height:74px}
  .fd,.mt{position:relative;background:${sel?'#2a2d30':'#1a1d1f'};border-radius:4px;height:74px}
  .fd{width:25px}.mt{width:24px;display:flex;flex-direction:column;padding-top:4px}
  .fd svg{display:block}
  .cap{position:absolute;left:1px;top:${capTop}px;width:10px;height:22px;border-radius:1.5px;box-shadow:0 0 1px #000;
   background:linear-gradient(${c0} 0 11%,${c1} 11% 28%,${c2} 28% 33%,${c1} 33% 45%,#2a2a2a 45% 50%,${c2} 50% 56%,${c1} 56% 68%,${c2} 68% 73%,${c1} 73% 88%,${c0} 88%)}
  .mt b{height:15px;line-height:15px;font-weight:400;font-size:9px;color:#64676a;text-align:center;white-space:pre}
  .mt u{position:absolute;width:8.5px;text-decoration:none;
   background:linear-gradient(rgba(0,0,0,.2),rgba(0,0,0,.2)) 0 calc(100% - 25px)/100% 1px no-repeat,linear-gradient(rgba(0,0,0,.2),rgba(0,0,0,.2)) 0 calc(100% - 10px)/100% 1px no-repeat,linear-gradient(#2cf0a2,#1bd6fb) 0 100%/100% 52px no-repeat}
  .val{margin-top:7px;width:52px;height:16px;display:grid;grid-template-columns:26px 26px;background:${sel?'#9b9d9e':'#1b1e20'};border:1px solid ${sel?'#5f6163':'#2c3033'};border-radius:3px;overflow:hidden;font-size:11px;line-height:14px;text-align:center;color:${sel?'#333':'#b4b4b4'};letter-spacing:-.1px;white-space:nowrap}
  .val i{font-style:normal;display:block;background:${sel?'#8b8d8e':'#3c3f41'}}
  .val s{text-decoration:none;display:block}
  .g2{margin-top:6px}
  .ft{display:grid;grid-template-columns:19px 21px 12px;margin-top:5px;height:16px;align-items:center;justify-items:center;margin-left:-3px;color:${sel?'#1a1a1a':'#b0b0b0'};font-size:12px}
  .pb{border:1px solid ${sel?'#555':'#3f4346'};border-radius:3px;width:15px;height:15px;display:flex;align-items:center;justify-content:center;background:${sel?'#8e9091':'#3a3d3f'}}
  .nm{margin:3px 0 0 -4px;width:59px;height:40px;background:${sel?'#ececec':'#67696b'};color:${sel?'#1e1e1e':'#dedede'};font-size:11px;line-height:13.5px;padding:${a('two')?'1px':'8px'} 2px 0 4px;white-space:nowrap;overflow:hidden}
  .nm small{font-size:9.5px}
  </style>
  <div class="g"><span class="${a('mute')?'m':''}">M</span><span>${io&&a('nos')?'':'S'}</span><span class="l"></span><span class="l"><ic-on n="e" s="13"></ic-on></span></div>
  <div class="pan">${panb[0]?`<i style="left:${panb[0]}px;width:${panb[1]}px;background:#0a78c2"></i>`:''}<i style="left:${panb[2]}px;width:4.5px;background:#f0f0f0"></i>${a('pantext')}</div>
  <div class="fm">
   <div class="fd"><svg width="25" height="74"><rect x="5.5" y="5" width="1" height="66" fill="#000"/>${ticks}</svg><div class="cap"></div></div>
   <div class="mt">${off?'':'<b>- 0 -</b><b>- 12 -</b><b>- 24 -</b><b>- 40 -</b>'}${a('thin')?`<u style="left:4px;top:64px;height:2px;background:#1bd6fb"></u><u style="left:13px;top:64px;height:2px;background:#1bd6fb"></u>`:bar(ml,4)+bar(mr,13)}</div>
  </div>
  <div class="val"><s>${a('v1')}</s><i>${a('v2')}</i></div>
  <div class="g g2"><span>R</span><span>W</span><span class="l ${sel?'rc':''}">${io?'':`<ic-on n="dot" s="${sel?15:16}"></ic-on>`}</span><span class="l">${io?'':'<ic-on n="speaker" s="14"></ic-on>'}</span></div>
  <div class="ft">${kind==='piano'?'<span class="pb"><ic-on n="piano" s="12"></ic-on></span>':`<ic-on n="${kind}" s="${kind==='wave'?13:kind==='knob'?11:12}" style="--kn:#3a3d3f"></ic-on>`}<span style="line-height:0">${lk?`<ic-on n="${lk}" s="${lk==='mono'?10:11}"></ic-on>`:''}</span><span>${num}</span></div>
  <div class="nm">${a('name')}</div>`;
 }
}
customElements.define('strip-lower',StripLower);

const STRIPS=[
 {name:'guitar',num:1,kind:'wave',lk:'link',cap:'blue',captop:17,ml:521,mr:529,v1:'-3.16',v2:'-4.3',pan:'15,15,14.5',pantext:'L58'},
 {name:'kari2',num:2,kind:'wave',lk:'link',cap:'blue',captop:23,v1:'-6.42',v2:'-oo',mute:1,pan:'25,6,31',pantext:'R38'},
 {name:'無題<br>BB<small>ベース</small>_...',two:1,num:3,kind:'wave',lk:'mono',cap:'blue',captop:22,ml:527,mr:526,v1:'-5.89',v2:'-8.5',pan:',,23.5',pantext:'R6'},
 {name:'sforzando<br>VST_x64',two:1,num:4,kind:'piano',lk:'link',cap:'cream',captop:10,ml:532,mr:528,v1:'0.00',v2:'-7.8',sel:1,pan:'26,10,35',pantext:'R56',slot:'RoomW...SE',blue:1},
 {name:'無題',num:5,kind:'knob',cap:'tan',captop:54,v1:'オフ',v2:'0',off:1,pan:'7,21,2',pantext:'オフ',noslot:1},
 {name:'SysEx <small>データ</small>',num:6,kind:'knob',cap:'tan',captop:54,v1:'オフ',v2:'0',off:1,pan:'7,21,2',pantext:'オフ',noslot:1},
 {name:'無題<br>BB<small>ベース</small>_...',two:1,num:7,kind:'wave',lk:'link',cap:'blue',captop:18,ml:522,mr:527,v1:'-3.64',v2:'-6.3',pan:',,23.5',pantext:'L6'},
 {name:'VOCALOID<br>VST_x64',two:1,num:8,kind:'piano',lk:'link',cap:'cream',captop:14,ml:528,mr:528,v1:'-1.46',v2:'-8.1',pan:',,23.5',pantext:'C'}
];
const IN={name:'Stereo In',num:1,kind:'pin',lk:'link',cap:'red',captop:10,v1:'0.00',v2:'-44.8',thin:1,io:1,nos:1,pan:',,23.5',pantext:'C'};
const OUT={name:'Stereo Out',num:1,kind:'pout',lk:'link',cap:'red',captop:10,ml:508,mr:510,v1:'0.00',v2:'-1.0',io:1,pan:',,23.5',pantext:'C',slot:'Ozone 1...ts',blue:1};
function attrs(o,keys){return Object.keys(o).filter(k=>keys.includes(k)).map(k=>`${k==='slot'?'slot-name':k}="${String(o[k]).replace(/"/g,'&quot;')}"`).join(' ')}
const UK=['sel','slot','noslot','blue'],LK=['name','num','kind','lk','cap','captop','ml','mr','v1','v2','thin','io','nos','pan','pantext','mute','sel','off','two'];
const up=o=>`<strip-upper ${attrs(o,UK)}></strip-upper>`,lo=o=>`<strip-lower ${attrs(o,LK)}></strip-lower>`;

class DawMixer extends HTMLElement{
 constructor(){super();this.attachShadow({mode:'open'}).innerHTML=`<style>
 :host{display:block;height:358px;flex:none;border:1px solid #33383b;border-bottom:0;border-radius:5px 5px 0 0;box-sizing:border-box;background:#23282b;overflow:hidden}
 *{box-sizing:border-box}
 .tb{height:35px;display:flex;align-items:flex-start;padding:8px 3px 0 392px;margin-left:6px;border-bottom:2px solid #4c5053;font-size:11.5px;color:#c4c4c4;gap:6px}
 .tb>div{height:23px;display:flex;align-items:center;border-radius:3px;border:1px solid #4a4e51}
 .fn{width:23px;justify-content:center;background:#16191b;color:#e2e2e2}
 .q{width:58px;justify-content:center;background:#3c3f41;color:#c8c8c8}
 .zg{width:129px;background:#3c3f41;color:#d8d8d8;overflow:hidden}
 .zg span{width:23px;display:flex;justify-content:center}
 .zg b{width:35px;height:100%;background:#16191b;font-weight:400;text-align:center;line-height:21px;font-size:12px;color:#d5d5d5}
 .wrap{display:grid;grid-template-columns:1063px 11px;column-gap:2px;margin-left:6px}
 .row{display:flex}
 .gut{width:13px;flex:none;border-right:1px solid #0f1214}
 .sp{flex:1;border-right:1px solid #0f1214}
 .tail{width:17px;flex:none}
 .div{height:2.5px;background:#7d8082;position:relative;margin:0}
 .dash{position:absolute;left:520px;top:-2px;width:22px;height:2px;background:repeating-linear-gradient(90deg,#eee 0 4px,transparent 4px 6px)}
 .scroll{background:#3a3c3e;border-radius:3px;grid-column:2;grid-row:1;margin-top:3px;display:flex;flex-direction:column;align-items:center;color:#ddd}
 .scroll .t{width:7.5px;height:125px;background:#f2f2f2;border-radius:2px;margin-top:3px}
 </style>
 <div class="tb">
  <div class="fn"><ic-on n="funnel" s="14"></ic-on></div>
  <div class="q">Q-Link</div>
  <div class="zg"><span><ic-on n="tin" s="13"></ic-on></span><span><ic-on n="tout" s="13"></ic-on></span><b>17</b><span><ic-on n="hour" s="13"></ic-on></span><span><ic-on n="updn" s="13"></ic-on></span></div>
  <div style="flex:1;border:0"></div>
  <div class="fn" style="margin-right:-1px"><ic-on n="gear" s="14"></ic-on></div>
  <div style="width:46px;background:#4a4d50;overflow:hidden"><span style="width:23px;height:100%;background:#16191b;display:flex;align-items:center;justify-content:center"><ic-on n="wingear" s="14"></ic-on></span><span style="flex:1;display:flex;justify-content:center;color:#e6e6e6"><ic-on n="arrow" s="13"></ic-on></span></div>
 </div>
 <div class="wrap">
  <div>
   <div class="row" style="margin-top:2px">${up(IN)}<div class="gut"></div>${STRIPS.map(up).join('')}<div class="sp"></div>${up(OUT)}<div class="tail"></div></div>
   <div class="div"><div class="dash"></div></div>
   <div class="row" style="margin-top:.5px">${lo(IN)}<div class="gut"></div>${STRIPS.map(lo).join('')}<div class="sp"></div>${lo(OUT)}<div class="tail"></div></div>
  </div>
  <div class="scroll"><ic-on n="up" s="9" style="margin-top:3px"></ic-on><div class="t"></div></div>
 </div>`;}
}
customElements.define('daw-mixer',DawMixer);
</script>
</body></html>
